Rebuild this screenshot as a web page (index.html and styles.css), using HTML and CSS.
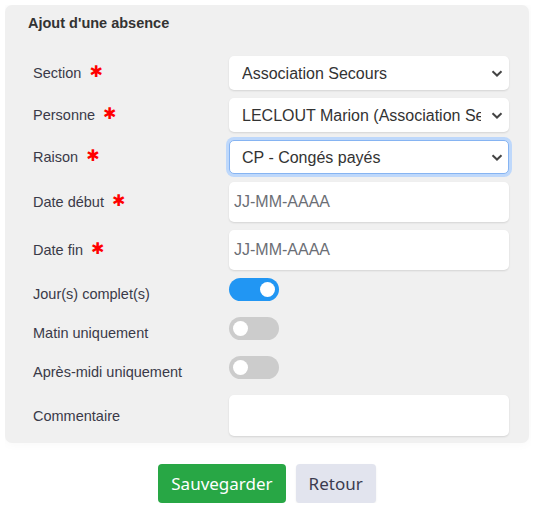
FILE: index.html
```html
<!DOCTYPE html>
<html>
<head>
    <title>Ajout d'une absence</title>
    <link rel="stylesheet" href="styles.css">
</head>
<body>
    <form class="absence-form">
        <div class="card">
            <h3 class="card-title">Ajout d'une absence</h3>

            <div class="row">
                <label for="section">Section <span class="req">&#10033;</span></label>
                <div class="select-wrap">
                    <select id="section" class="field">
                        <option>Association Secours</option>
                    </select>
                    <svg class="chevron" width="12" height="7" viewBox="0 0 12 7"><path d="M1.5 1.2 L6 5.5 L10.5 1.2" fill="none" stroke="#444" stroke-width="2"/></svg>
                </div>
            </div>

            <div class="row">
                <label for="personne">Personne <span class="req">&#10033;</span></label>
                <div class="select-wrap">
                    <select id="personne" class="field">
                        <option>LECLOUT Marion (Association Secours)</option>
                    </select>
                    <svg class="chevron" width="12" height="7" viewBox="0 0 12 7"><path d="M1.5 1.2 L6 5.5 L10.5 1.2" fill="none" stroke="#444" stroke-width="2"/></svg>
                </div>
            </div>

            <div class="row">
                <label for="raison">Raison <span class="req">&#10033;</span></label>
                <div class="select-wrap">
                    <select id="raison" class="field focused">
                        <option>CP - Congés payés</option>
                    </select>
                    <svg class="chevron" width="12" height="7" viewBox="0 0 12 7"><path d="M1.5 1.2 L6 5.5 L10.5 1.2" fill="none" stroke="#444" stroke-width="2"/></svg>
                </div>
            </div>

            <div class="row">
                <label for="debut">Date début <span class="req">&#10033;</span></label>
                <input id="debut" class="field text-field" type="text" placeholder="JJ-MM-AAAA">
            </div>

            <div class="row">
                <label for="fin">Date fin <span class="req">&#10033;</span></label>
                <input id="fin" class="field text-field" type="text" placeholder="JJ-MM-AAAA">
            </div>

            <div class="row toggle-row">
                <label>Jour(s) complet(s)</label>
                <div class="toggle-wrap"><span class="switch on"></span></div>
            </div>

            <div class="row toggle-row">
                <label>Matin uniquement</label>
                <div class="toggle-wrap"><span class="switch"></span></div>
            </div>

            <div class="row toggle-row">
                <label>Après-midi uniquement</label>
                <div class="toggle-wrap"><span class="switch"></span></div>
            </div>

            <div class="row">
                <label for="commentaire">Commentaire</label>
                <input id="commentaire" class="field text-field comment" type="text">
            </div>
        </div>

        <div class="actions">
            <button type="submit" class="btn btn-save">Sauvegarder</button>
            <button type="button" class="btn btn-back">Retour</button>
        </div>
    </form>
</body>
</html>
```

FILE: styles.css
```css
body {
    margin: 5px;
    background-color: #fff;
    font-family: "Liberation Sans", Arial, sans-serif;
    color: #3a3a48;
}

.absence-form {
    width: 524px;
}

.card {
    background-color: #f0f0f0;
    border-radius: 7px;
    box-shadow: 0 0 12px rgba(0, 0, 0, 0.04);
    padding: 8px 20px 7px 23px;
}

.card-title {
    margin: 0 0 23px 0;
    font-size: 14.5px;
    line-height: 20px;
    font-weight: bold;
    color: #333;
}

.row {
    display: flex;
    align-items: center;
    margin-bottom: 8px;
}

.row:last-child {
    margin-bottom: 0;
}

.row label {
    width: 196px;
    padding-left: 5px;
    font-size: 14.5px;
    color: #3a3a48;
}

.req {
    color: #f00;
    font-family: "DejaVu Sans", sans-serif;
    font-size: 16px;
    line-height: 10px;
    margin-left: 4px;
    position: relative;
    top: -1px;
}

.select-wrap {
    position: relative;
    width: 280px;
}

.field {
    width: 280px;
    height: 34px;
    box-sizing: border-box;
    border: 1px solid transparent;
    border-radius: 5px;
    background-color: #fff;
    box-shadow: 0 1px 2px rgba(0, 0, 0, 0.12);
    font-family: "Liberation Sans", Arial, sans-serif;
    font-size: 16px;
    color: #333;
    padding: 0 27px 0 12px;
    outline: none;
    appearance: none;
    -webkit-appearance: none;
    display: block;
}

.field.focused {
    border-color: #86b4f2;
    box-shadow: 0 0 0 3px #bed8fb;
}

.chevron {
    position: absolute;
    right: 6px;
    top: 14px;
    pointer-events: none;
}

.text-field {
    height: 40px;
    padding: 0 4px;
}

.text-field.comment {
    height: 41px;
}

.text-field::placeholder {
    color: #6b6e75;
}

.toggle-wrap {
    height: 31px;
}

.switch {
    display: block;
    position: relative;
    width: 50px;
    height: 23px;
    border-radius: 12px;
    background-color: #ccc;
}

.switch::after {
    content: "";
    position: absolute;
    top: 4px;
    left: 4px;
    width: 15px;
    height: 15px;
    border-radius: 50%;
    background-color: #fff;
}

.switch.on {
    background-color: #2196f3;
}

.switch.on::after {
    left: 31px;
}

.actions {
    display: flex;
    justify-content: center;
    gap: 10px;
    margin-top: 21px;
}

.btn {
    height: 39px;
    border: none;
    border-radius: 4px;
    font-family: "Noto Sans", "Open Sans", sans-serif;
    font-size: 17px;
    padding: 0 13px;
    cursor: pointer;
}

.btn-save {
    background-color: #28a745;
    color: #fff;
}

.btn-back {
    background-color: #e2e4ee;
    color: #3b3b50;
    box-shadow: 0 1px 2px rgba(0, 0, 0, 0.08);
}
```
